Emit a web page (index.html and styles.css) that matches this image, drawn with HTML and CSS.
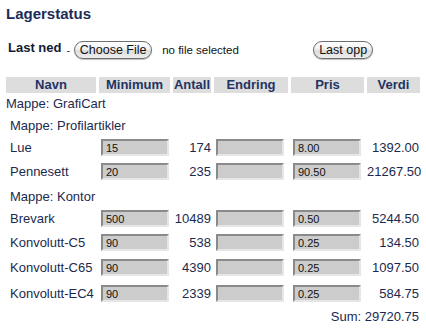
FILE: index.html
```html
<!DOCTYPE html>
<html lang="no">
<head>
    <meta charset="UTF-8">
    <title>Lagerstatus</title>
    <link rel="stylesheet" href="styles.css">
</head>
<body>
    <h2 class="title">Lagerstatus</h2>

    <div class="upload">
        <span class="upload-label">Last ned</span>
        <span class="dash">-</span>
        <button type="button" class="mac-btn choose">Choose File</button>
        <span class="file-name">no file selected</span>
        <button type="button" class="mac-btn send">Last opp</button>
    </div>

    <table class="stock">
        <colgroup>
            <col class="c-name">
            <col class="c-min">
            <col class="c-qty">
            <col class="c-change">
            <col class="c-price">
            <col class="c-value">
        </colgroup>
        <thead>
            <tr>
                <th>Navn</th>
                <th>Minimum</th>
                <th>Antall</th>
                <th>Endring</th>
                <th>Pris</th>
                <th>Verdi</th>
            </tr>
        </thead>
        <tbody>
            <tr class="folder top"><td colspan="6">Mappe: GrafiCart</td></tr>
            <tr class="folder"><td colspan="6">Mappe: Profilartikler</td></tr>
            <tr class="item">
                <td class="name">Lue</td>
                <td><input type="text" value="15"></td>
                <td class="num">174</td>
                <td><input type="text" value=""></td>
                <td><input type="text" value="8.00"></td>
                <td class="num">1392.00</td>
            </tr>
            <tr class="item">
                <td class="name">Pennesett</td>
                <td><input type="text" value="20"></td>
                <td class="num">235</td>
                <td><input type="text" value=""></td>
                <td><input type="text" value="90.50"></td>
                <td class="num">21267.50</td>
            </tr>
            <tr class="folder"><td colspan="6">Mappe: Kontor</td></tr>
            <tr class="item">
                <td class="name">Brevark</td>
                <td><input type="text" value="500"></td>
                <td class="num">10489</td>
                <td><input type="text" value=""></td>
                <td><input type="text" value="0.50"></td>
                <td class="num">5244.50</td>
            </tr>
            <tr class="item">
                <td class="name">Konvolutt-C5</td>
                <td><input type="text" value="90"></td>
                <td class="num">538</td>
                <td><input type="text" value=""></td>
                <td><input type="text" value="0.25"></td>
                <td class="num">134.50</td>
            </tr>
            <tr class="item tall">
                <td class="name">Konvolutt-C65</td>
                <td><input type="text" value="90"></td>
                <td class="num">4390</td>
                <td><input type="text" value=""></td>
                <td><input type="text" value="0.25"></td>
                <td class="num">1097.50</td>
            </tr>
            <tr class="item tall">
                <td class="name">Konvolutt-EC4</td>
                <td><input type="text" value="90"></td>
                <td class="num">2339</td>
                <td><input type="text" value=""></td>
                <td><input type="text" value="0.25"></td>
                <td class="num">584.75</td>
            </tr>
            <tr class="sum">
                <td colspan="6">Sum: 29720.75</td>
            </tr>
        </tbody>
    </table>
</body>
</html>
```

FILE: styles.css
```css
/* General */
body {
    margin: 3px;
    font-family: "Liberation Sans", Arial, sans-serif;
    font-size: 13px;
    color: #1b2a4e;
    background: #ffffff;
}

.title {
    margin: 3px 0 0 3px;
    font-size: 15px;
    line-height: 16px;
    font-weight: bold;
    color: #1b2c57;
}

/* Upload bar */
.upload {
    display: flex;
    align-items: center;
    height: 18px;
    margin: 19px 0 0 5px;
    white-space: nowrap;
}

.upload-label {
    font-weight: bold;
    color: #111a30;
    position: relative;
    top: -3px;
}

.dash {
    margin: 0 4px 0 5px;
    font-size: 11px;
    color: #333;
}

.mac-btn {
    box-sizing: border-box;
    height: 18px;
    padding: 0;
    border: 1px solid #6d6d6d;
    border-radius: 9px;
    background: linear-gradient(#ffffff, #f1f1f1 45%, #dcdcdc 55%, #eeeeee);
    font-family: "Liberation Sans", Arial, sans-serif;
    font-size: 12.5px;
    line-height: 16px;
    color: #111;
    white-space: nowrap;
    box-shadow: 0 1px 1px rgba(0, 0, 0, 0.25);
}

.choose {
    width: 78px;
}

.file-name {
    margin-left: 10px;
    width: 151px;
    font-size: 11.5px;
    color: #111;
}

.send {
    width: 60px;
}

/* Table */
.stock {
    margin-top: 15px;
    border-spacing: 3px;
    table-layout: fixed;
    width: 420px;
}

.c-name { width: 90px; }
.c-min { width: 71px; }
.c-qty { width: 38px; }
.c-change { width: 74px; }
.c-price { width: 73px; }
.c-value { width: 53px; }

.stock th {
    padding: 0;
    height: 16px;
    line-height: 16px;
    background: #dddddd;
    font-weight: bold;
    color: #1f3463;
    text-align: center;
}

.stock td {
    padding: 0;
    white-space: nowrap;
}

.folder td {
    height: 17px;
    padding-top: 3px;
    padding-left: 4px;
}

.folder.top td {
    height: 15px;
    padding: 0;
}

.item td {
    height: 21px;
    padding: 0;
}

.item.tall td {
    height: 23px;
}

.item td.name {
    padding-left: 4px;
}

.item input {
    box-sizing: border-box;
    width: 68px;
    height: 17px;
    margin: 0 0 0 2px;
    padding: 0 0 0 3px;
    border: 2px solid;
    border-color: #8a8a8a #e6e6e6 #e6e6e6 #8a8a8a;
    background: #cccccc;
    font-family: "Liberation Sans", Arial, sans-serif;
    font-size: 11px;
    color: #111;
    vertical-align: middle;
}

.num {
    text-align: right;
}

.item td.num:last-child {
    padding-right: 1px;
}

.sum td {
    text-align: right;
    padding-top: 1px;
    padding-right: 1px;
}
```
